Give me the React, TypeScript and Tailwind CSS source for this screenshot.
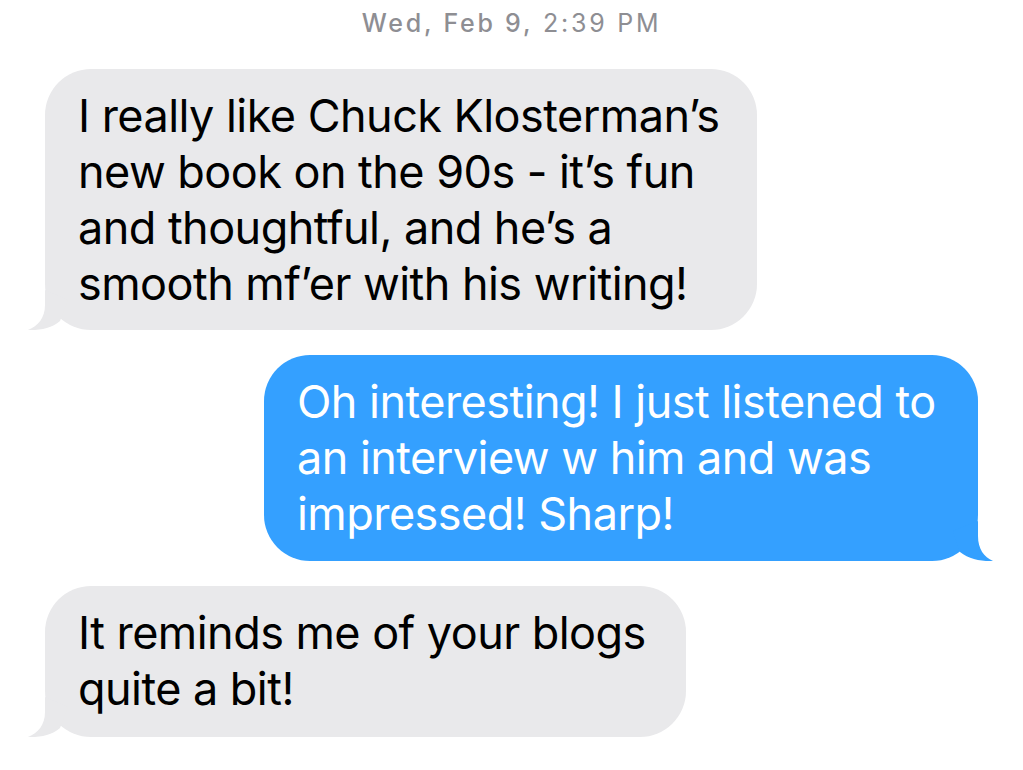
import React from "react";

function LeftTail({ color }: { color: string }) {
  return (
    <svg
      className="absolute bottom-0 left-[-17px]"
      width="40"
      height="40"
      viewBox="0 0 40 40"
      overflow="visible"
    >
      <path d="M17,0 L17,15 C17,28 10,36 0,40 C12,40.5 24,38 32,31 L40,10 Z" fill={color} />
    </svg>
  );
}

function RightTail({ color }: { color: string }) {
  return (
    <svg
      className="absolute bottom-0 right-[-15px]"
      width="40"
      height="40"
      viewBox="0 0 40 40"
      overflow="visible"
    >
      <path d="M25,0 L25,15 C25,28 31,36 40,40 C28,40.5 16,38 7,31 L0,10 Z" fill={color} />
    </svg>
  );
}

export default function App() {
  return (
    <div
      className="w-[1023px] h-[770px] bg-white overflow-hidden flex flex-col"
      style={{ fontFamily: "Inter, 'Liberation Sans', sans-serif" }}
    >
      <div className="pt-[8px] text-center text-[25px] leading-[30px] tracking-[0.11em] text-[#8e8e93]">
        <span className="font-medium">Wed, Feb 9,</span> 2:39 PM
      </div>

      <div className="flex flex-col mt-[31px] text-[45px] leading-[56px] tracking-[-0.012em]">
        <div className="relative self-start ml-[45px] w-[712px] bg-[#e9e9eb] rounded-[46px] pl-[33px] pt-[19px] pb-[18px] text-black">
          <LeftTail color="#e9e9eb" />
          <div className="relative">
            I really like Chuck Klosterman’s
            <br />
            new book on the 90s - it’s fun
            <br />
            and thoughtful, and he’s a
            <br />
            smooth mf’er with his writing!
          </div>
        </div>

        <div className="relative self-start ml-[264px] mt-[25px] w-[714px] bg-[#34a0ff] rounded-[46px] pl-[33px] pt-[19px] pb-[19px] text-white">
          <RightTail color="#34a0ff" />
          <div className="relative">
            Oh interesting! I just listened to
            <br />
            an interview w him and was
            <br />
            impressed! Sharp!
          </div>
        </div>

        <div className="relative self-start ml-[45px] mt-[25px] w-[641px] bg-[#e9e9eb] rounded-[46px] pl-[33px] pt-[19px] pb-[20px] text-black">
          <LeftTail color="#e9e9eb" />
          <div className="relative">
            It reminds me of your blogs
            <br />
            quite a bit!
          </div>
        </div>
      </div>
    </div>
  );
}
